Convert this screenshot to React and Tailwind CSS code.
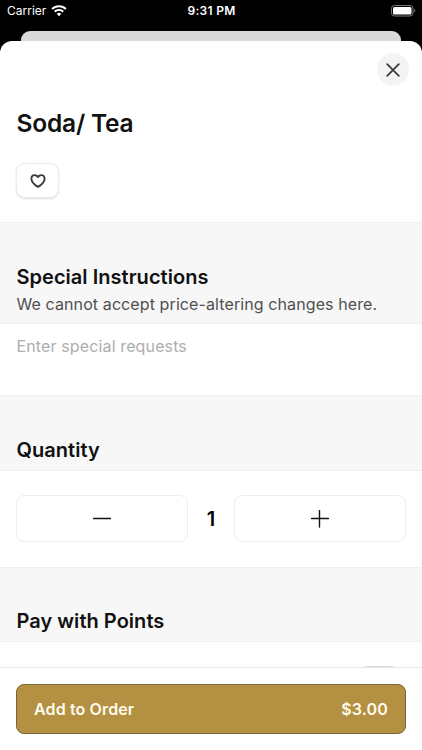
import React, { useState } from 'react';

const WifiIcon = () => (
    <svg width="16" height="12" viewBox="0 0 16 12" fill="white">
        <path d="M8 0.2C11 0.2 13.6 1.3 15.6 3.2L14.1 4.8C12.5 3.2 10.4 2.3 8 2.3S3.5 3.2 1.9 4.8L0.4 3.2C2.4 1.3 5 0.2 8 0.2Z" />
        <path d="M8 4C9.9 4 11.6 4.7 12.9 5.9L11.4 7.4C10.5 6.6 9.3 6.1 8 6.1S5.5 6.6 4.6 7.4L3.1 5.9C4.4 4.7 6.1 4 8 4Z" />
        <path d="M8 7.7C8.9 7.7 9.7 8 10.3 8.7L8 11.3L5.7 8.7C6.3 8 7.1 7.7 8 7.7Z" />
    </svg>
);

const BatteryIcon = () => (
    <svg width="25" height="12" viewBox="0 0 25 12" fill="none">
        <rect x="0.5" y="0.5" width="21.5" height="10.5" rx="3" stroke="#7a7a7a" />
        <rect x="2" y="2" width="18.5" height="7.5" rx="1.5" fill="white" />
        <path d="M23.3 4V7.6C24 7.3 24.4 6.6 24.4 5.8S24 4.3 23.3 4Z" fill="#7a7a7a" />
    </svg>
);

const StatusBar = () => (
    <div className="h-[31px] shrink-0 grid grid-cols-3 items-start pt-[3px] pl-[7px] pr-[6px] text-white">
        <div className="flex items-center gap-[5px] h-4 text-[12px]">
            <span>Carrier</span>
            <WifiIcon />
        </div>
        <div className="text-center text-[12px] leading-4 font-semibold tracking-[0.3px]">9:31 PM</div>
        <div className="flex justify-end items-center h-[15px]">
            <BatteryIcon />
        </div>
    </div>
);

const SectionHeader = ({ title, subtitle, className }) => (
    <div className={`bg-[#f7f7f7] border-y border-[#f0f0f0] px-[16.5px] flex flex-col justify-end ${className}`}>
        <h2 className="text-[20px] leading-7 font-semibold tracking-[0.03px] text-[#111111]">{title}</h2>
        {subtitle && <p className="mt-[2px] text-[16px] leading-[22px] tracking-[0.1px] text-[#505050] whitespace-nowrap">{subtitle}</p>}
    </div>
);

const App = () => {
    const [quantity, setQuantity] = useState(1);
    const [request, setRequest] = useState('');

    return (
        <div className="w-[422px] h-[750px] bg-black overflow-hidden flex flex-col font-['Inter',sans-serif]">
            <StatusBar />
            <div className="h-[10px] shrink-0 mx-[21px] rounded-t-[9px] bg-[#d9d9d9]" />

            <div className="flex-1 min-h-0 bg-white rounded-t-[12px] overflow-hidden flex flex-col">
                <div className="flex-1 min-h-0 overflow-hidden">
                    <div className="flex justify-end pt-3 pr-[13px]">
                        <button className="w-8 h-[33px] rounded-full bg-[#f4f4f4] flex items-center justify-center">
                            <svg width="14" height="14" viewBox="0 0 14 14" fill="none" stroke="#3c3c3c" strokeWidth="1.8" strokeLinecap="round">
                                <path d="M1.2 1.2L12.8 12.8M12.8 1.2L1.2 12.8" />
                            </svg>
                        </button>
                    </div>

                    <div className="h-[136px] px-[16.5px] pt-[21px]">
                        <h1 className="text-[24.5px] leading-8 font-semibold tracking-[-0.2px] text-[#111111]">Soda/ Tea</h1>
                        <button className="-ml-[0.5px] mt-6 w-[43px] h-[35px] rounded-[9px] border border-[#ececec] bg-white shadow-[0_1px_2px_rgba(0,0,0,0.14)] flex items-center justify-center">
                            <svg width="16" height="14" viewBox="0 0 16 14" fill="none" stroke="#3a3a3a" strokeWidth="1.9" strokeLinejoin="round">
                                <path d="M8 12.9C6.2 11.8 1.4 8.5 1.4 4.7C1.4 2.6 2.7 1.1 4.6 1.1C6.1 1.1 7.3 1.9 8 3.1C8.7 1.9 9.9 1.1 11.4 1.1C13.3 1.1 14.6 2.6 14.6 4.7C14.6 8.5 9.8 11.8 8 12.9Z" />
                            </svg>
                        </button>
                    </div>

                    <SectionHeader
                        title="Special Instructions"
                        subtitle="We cannot accept price-altering changes here."
                        className="h-[102px] pb-2"
                    />
                    <textarea
                        value={request}
                        onChange={(e) => setRequest(e.target.value)}
                        placeholder="Enter special requests"
                        className="block w-full h-[71px] px-[16.5px] pt-[11px] resize-none outline-none text-[16px] leading-[22px] tracking-[0.13px] placeholder:text-[#aeaeae]"
                    />

                    <SectionHeader title="Quantity" className="h-[76px] pb-[6px]" />
                    <div className="h-24 px-4 pt-6 flex items-start">
                        <button
                            onClick={() => setQuantity(Math.max(1, quantity - 1))}
                            className="flex-1 h-[47px] rounded-[8px] border border-[#eeeeee] flex items-center justify-center"
                        >
                            <svg width="18" height="18" viewBox="0 0 18 18" stroke="#111111" strokeWidth="1.4" strokeLinecap="round">
                                <path d="M0.5 8.5H17.5" />
                            </svg>
                        </button>
                        <span className="w-[46px] h-[47px] flex items-center justify-center text-[20px] font-semibold text-black">{quantity}</span>
                        <button
                            onClick={() => setQuantity(quantity + 1)}
                            className="flex-1 h-[47px] rounded-[8px] border border-[#eeeeee] flex items-center justify-center"
                        >
                            <svg width="18" height="18" viewBox="0 0 18 18" stroke="#111111" strokeWidth="1.4" strokeLinecap="round">
                                <path d="M0.5 8.5H17.5M8.5 0.5V17" />
                            </svg>
                        </button>
                    </div>

                    <SectionHeader title="Pay with Points" className="h-[75px] pb-[6px]" />
                    <div className="flex justify-end pt-6 pr-[17px]">
                        <div className="w-[51px] h-[31px] rounded-full bg-[#d8d8d8]" />
                    </div>
                </div>

                <div className="h-[83px] shrink-0 border-t border-[#e8e8e8] px-4 pt-4 bg-white">
                    <button className="w-full h-[49.5px] rounded-[8px] border border-[#7b6435] bg-[#b39042] px-[17px] flex items-center justify-between text-[16px] font-semibold tracking-[0.13px] text-[#fffbed]">
                        <span>Add to Order</span>
                        <span>$3.00</span>
                    </button>
                </div>
            </div>
        </div>
    );
};

export default App;
